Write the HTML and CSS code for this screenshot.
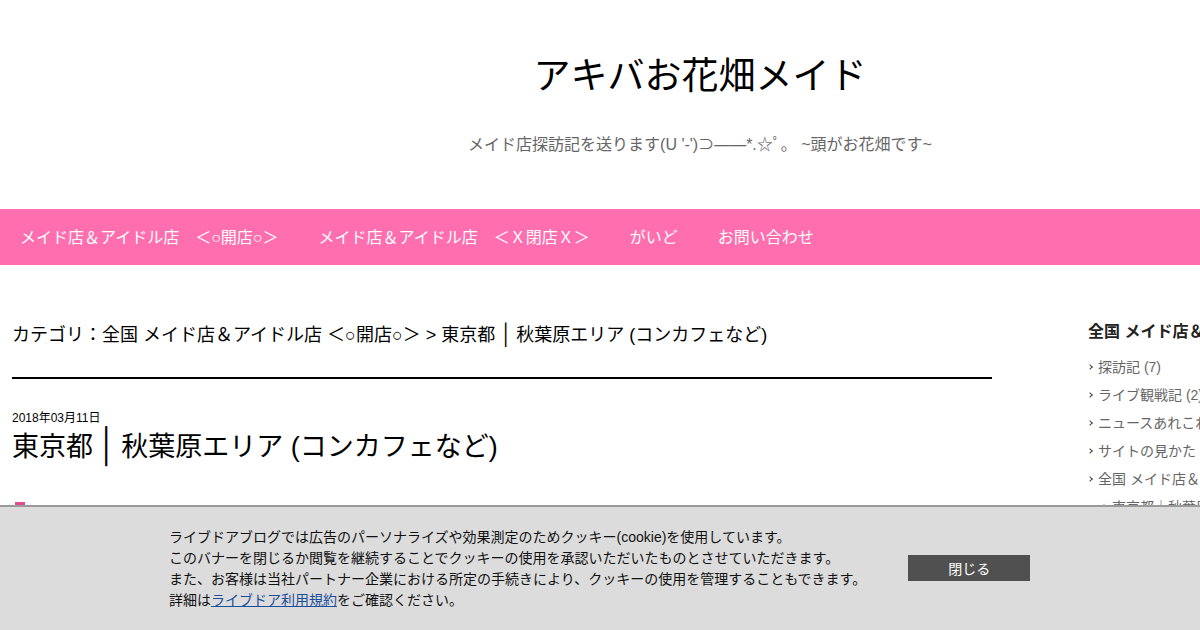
FILE: index.html
```html
<!DOCTYPE html>
<html lang="ja">
<head>
<meta charset="utf-8">
<title>アキバお花畑メイド</title>
<link rel="stylesheet" href="styles.css">
</head>
<body>
<div class="page">
  <header class="site-header">
    <h1 class="site-title">アキバお花畑メイド</h1>
    <p class="site-desc">メイド店探訪記を送ります(U '-')⊃——*.☆ﾟ。 ~頭がお花畑です~</p>
  </header>
  <nav class="gnav">
    <a href="#">メイド店＆アイドル店　＜○開店○＞</a>
    <a href="#">メイド店＆アイドル店　＜Ｘ閉店Ｘ＞</a>
    <a href="#">がいど</a>
    <a href="#">お問い合わせ</a>
  </nav>
  <div class="columns">
    <main class="main">
      <h2 class="cat-title">カテゴリ：全国 メイド店＆アイドル店 ＜○開店○＞ &gt; 東京都<span class="bar">│</span>秋葉原エリア (コンカフェなど)</h2>
      <article class="entry">
        <div class="entry-date">2018年03月11日</div>
        <h3 class="entry-title">東京都<span class="bar">│</span>秋葉原エリア (コンカフェなど)</h3>
        <div class="entry-body"><span class="mark"></span></div>
      </article>
    </main>
    <aside class="side">
      <h4 class="side-title">全国 メイド店＆アイドル店</h4>
      <ul class="side-list">
        <li>探訪記 (7)</li>
        <li>ライブ観戦記 (2)</li>
        <li>ニュースあれこれ</li>
        <li>サイトの見かた</li>
        <li>全国 メイド店＆アイドル店</li>
        <li class="sub">東京都｜秋葉原エリア</li>
      </ul>
    </aside>
  </div>
</div>
<div class="cookie">
  <div class="cookie-text">
    <p>ライブドアブログでは広告のパーソナライズや効果測定のためクッキー(cookie)を使用しています。</p>
    <p>このバナーを閉じるか閲覧を継続することでクッキーの使用を承認いただいたものとさせていただきます。</p>
    <p>また、お客様は当社パートナー企業における所定の手続きにより、クッキーの使用を管理することもできます。</p>
    <p>詳細は<a href="#">ライブドア利用規約</a>をご確認ください。</p>
  </div>
  <button class="cookie-close">閉じる</button>
</div>
</body>
</html>
```
FILE: styles.css
```css
html, body {
  margin: 0;
  padding: 0;
  overflow: hidden;
  background: #fff;
}
body {
  font-family: "Liberation Sans", Arial, "Noto Sans CJK JP", sans-serif;
  color: #000;
  width: 1200px;
  height: 630px;
}
.page {
  width: 1400px;
}
.site-header {
  height: 209px;
  display: flex;
  flex-direction: column;
  align-items: center;
  padding-top: 53px;
  box-sizing: border-box;
}
.site-title {
  margin: 0;
  font-size: 37px;
  font-weight: normal;
  line-height: 48px;
  color: #000;
}
.site-desc {
  margin: 34px 0 0;
  font-size: 16px;
  line-height: 20px;
  color: #666;
}
.gnav {
  background: #ff6eae;
  height: 56px;
  display: flex;
  align-items: center;
  padding-left: 20px;
  padding-bottom: 3px;
  box-sizing: border-box;
  gap: 40px;
}
.gnav a {
  color: #fff;
  text-decoration: none;
  font-size: 16px;
}
.columns {
  display: flex;
  padding: 0 12px;
  gap: 96px;
}
.main {
  width: 980px;
  padding-top: 58px;
}
.cat-title {
  margin: 0;
  font-size: 18px;
  font-weight: normal;
  line-height: 24px;
  padding-bottom: 30px;
  border-bottom: 2px solid #000;
}
.bar {
  display: inline-block;
  font-family: "DejaVu Sans", sans-serif;
  margin: 0 5px;
  transform: scaleY(1.15);
}
.entry-title .bar {
  margin: 0 7px 0 5px;
  transform: scaleY(1.25);
}
.entry {
  padding-top: 31px;
}
.entry-date {
  font-size: 12px;
  line-height: 16px;
}
.entry-title {
  margin: 3px 0 0;
  font-size: 27px;
  font-weight: normal;
  line-height: 36px;
}
.entry-body {
  padding-top: 37px;
  padding-left: 3px;
}
.mark {
  display: block;
  width: 10px;
  height: 10px;
  background: #e04e8f;
}
.side {
  width: 300px;
  padding-top: 57px;
}
.side-title {
  margin: 0;
  font-size: 16px;
  font-weight: bold;
  line-height: 20px;
  color: #222;
}
.side-list {
  list-style: none;
  margin: 11px 0 0;
  padding: 0;
}
.side-list li {
  font-size: 14px;
  line-height: 28px;
  color: #666;
  white-space: nowrap;
  display: flex;
  align-items: center;
  gap: 6px;
}
.side-list li::before {
  content: "";
  width: 3px;
  height: 3px;
  border-top: 1px solid #444;
  border-right: 1px solid #444;
  transform: rotate(45deg);
}
.side-list li.sub {
  padding-left: 14px;
}
.cookie {
  position: fixed;
  left: 0;
  right: 0;
  bottom: 0;
  height: 123px;
  background: #dcdcdc;
  border-top: 2px solid #9a9a9a;
  display: flex;
  align-items: center;
  padding-left: 169px;
  gap: 42px;
}
.cookie-text p {
  margin: 0;
  font-size: 14px;
  line-height: 21px;
  color: #111;
}
.cookie-text a {
  color: #1a4d9c;
  text-decoration: underline;
}
.cookie-close {
  width: 122px;
  height: 26px;
  background: #505050;
  color: #fff;
  border: 0;
  font-family: inherit;
  font-size: 14px;
  padding: 0;
  margin-bottom: 2px;
}
```
